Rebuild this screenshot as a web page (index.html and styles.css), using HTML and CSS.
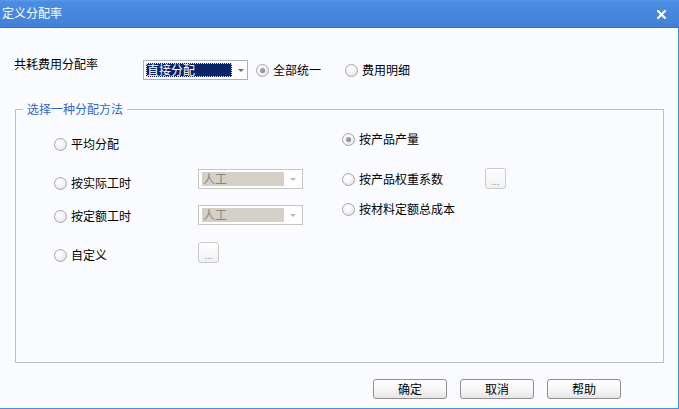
FILE: index.html
```html
<!DOCTYPE html>
<html lang="zh-CN">
<head>
<meta charset="utf-8">
<title>定义分配率</title>
<link rel="stylesheet" href="styles.css">
</head>
<body>
<div class="window">
  <div class="titlebar">
    <span class="title">定义分配率</span>
    <span class="close"><svg width="9" height="9" viewBox="0 0 9 9"><path d="M1 1 L8 8 M8 1 L1 8" stroke="#ffffff" stroke-width="2.2" stroke-linecap="square"/></svg></span>
  </div>
  <div class="body">
    <div class="toprow">
      <span class="lbl-main">共耗费用分配率</span>
      <div class="combo active">
        <span class="combo-sel">直接分配</span>
        <span class="arrow"></span>
      </div>
      <label class="radio checked r-all"><span class="dot"></span><span>全部统一</span></label>
      <label class="radio r-detail"><span class="dot"></span><span>费用明细</span></label>
    </div>

    <fieldset class="group">
      <legend>选择一种分配方法</legend>
      <div class="cols">
        <div class="col col-left">
          <div class="row">
            <label class="radio lw m3"><span class="dot"></span><span>平均分配</span></label>
          </div>
          <div class="row">
            <label class="radio lw m7"><span class="dot"></span><span>按实际工时</span></label>
            <div class="combo disabled"><span class="combo-dis">人工</span><span class="arrow light"></span></div>
          </div>
          <div class="row">
            <label class="radio lw m4"><span class="dot"></span><span>按定额工时</span></label>
            <div class="combo disabled"><span class="combo-dis">人工</span><span class="arrow light"></span></div>
          </div>
          <div class="row">
            <label class="radio lw m6"><span class="dot"></span><span>自定义</span></label>
            <button class="dots">...</button>
          </div>
        </div>
        <div class="col col-right">
          <div class="row">
            <label class="radio checked rw m3"><span class="dot"></span><span>按产品产量</span></label>
          </div>
          <div class="row">
            <label class="radio rw m4"><span class="dot"></span><span>按产品权重系数</span></label>
            <button class="dots">...</button>
          </div>
          <div class="row">
            <label class="radio rw m3"><span class="dot"></span><span>按材料定额总成本</span></label>
          </div>
        </div>
      </div>
    </fieldset>

    <div class="footer">
      <button class="btn">确定</button>
      <button class="btn">取消</button>
      <button class="btn">帮助</button>
    </div>
  </div>
</div>
</body>
</html>
```

FILE: styles.css
```css
* { box-sizing: border-box; }
html, body {
  margin: 0;
  padding: 0;
  background: #f9fbfe;
}
body {
  font-family: "Noto Sans CJK SC", "Noto Sans", sans-serif;
  font-size: 12px;
  color: #000;
}
.window {
  width: 679px;
  height: 409px;
  overflow: hidden;
  display: flex;
  flex-direction: column;
}
.titlebar {
  height: 28px;
  flex: 0 0 28px;
  background: linear-gradient(#5a9de9 0px, #4a8ce2 2px, #4586dc 20px, #3f7fd5 27px);
  border-bottom: 1px solid #3a74c6;
  display: flex;
  align-items: center;
  justify-content: space-between;
  padding: 0 13px 0 2px;
  color: #fff;
}
.title {
  font-size: 12px;
  line-height: 14px;
  margin-top: -1px;
}
.close {
  display: flex;
  width: 9px;
  height: 9px;
  margin-top: 1px;
}
.body {
  flex: 1 1 auto;
  background: #f9fbfe;
  border-right: 1px solid #4a8ee4;
  border-bottom: 1px solid #4a8ee4;
  display: flex;
  flex-direction: column;
}
.toprow {
  margin-top: 32px;
  height: 20px;
  padding-left: 14px;
  display: flex;
  align-items: center;
}
.lbl-main {
  width: 129px;
  flex: 0 0 129px;
  line-height: 14px;
  align-self: flex-start;
  margin-top: -3px;
}
.combo {
  width: 105px;
  height: 20px;
  flex: 0 0 105px;
  border: 1px solid #a9b0b9;
  background: #fff;
  display: flex;
  align-items: center;
  padding: 0 0 0 2px;
}
.combo-sel {
  width: 86px;
  height: 14px;
  background: #0a246a;
  color: #fff;
  line-height: 12px;
  font-size: 12px;
  border: 1px dotted #e8e8e8;
  white-space: nowrap;
  overflow: visible;
}
.arrow {
  flex: 1 1 auto;
  height: 100%;
  display: flex;
  align-items: center;
  justify-content: center;
}
.arrow::after {
  content: "";
  width: 0;
  height: 0;
  border-left: 3px solid transparent;
  border-right: 3px solid transparent;
  border-top: 3px solid #6e6e6e;
  margin-left: 2px;
}
.arrow.light::after {
  border-top-color: #b8b8b8;
  margin-left: 0;
}
.combo.disabled {
  border-color: #c6c6c6;
  padding-left: 3px;
}
.combo-dis {
  width: 82px;
  height: 14px;
  background: #d4d0c8;
  color: #8a8680;
  line-height: 14px;
  padding-left: 1px;
}
.radio {
  display: flex;
  align-items: center;
  gap: 4px;
  line-height: 14px;
  height: 14px;
  white-space: nowrap;
}
.dot {
  width: 13px;
  height: 13px;
  flex: 0 0 13px;
  border-radius: 50%;
  border: 1px solid #a8a8a8;
  background: radial-gradient(circle at 40% 35%, #ffffff 0%, #f4f4f4 45%, #d9d9d9 100%);
  display: flex;
  align-items: center;
  justify-content: center;
}
.radio.checked .dot::after {
  content: "";
  width: 5px;
  height: 5px;
  border-radius: 50%;
  background: radial-gradient(circle at 40% 40%, #b0b0b0, #707070);
}
.r-all {
  margin-left: 8px;
  width: 69px;
}
.r-detail {
  margin-left: 20px;
}
.group {
  margin: 22px 0 0 15px;
  width: 649px;
  height: 261px;
  border: 1px solid #b7c0cc;
  padding: 0;
  min-width: 0;
}
.group legend {
  margin-left: 7px;
  padding: 0 4px;
  line-height: 14px;
  font-size: 12px;
  color: #3565c4;
}
.cols {
  display: grid;
  grid-template-columns: 288px 1fr;
  padding-left: 38px;
}
.col {
  display: grid;
  align-content: start;
}
.col-left {
  padding-top: 18px;
  grid-template-rows: 35px 36px 37px 21px;
}
.col-right {
  padding-top: 13px;
  grid-template-rows: 39px 31px 20px;
}
.row {
  display: flex;
  align-items: flex-start;
}
.lw { width: 144px; flex: 0 0 144px; }
.rw { width: 143px; flex: 0 0 143px; }
.m3 { margin-top: 3px; }
.m4 { margin-top: 4px; }
.m6 { margin-top: 6px; }
.m7 { margin-top: 7px; }
.dots {
  display: block;
  width: 21px;
  height: 21px;
  padding: 8px 0 0 0;
  border: 1px solid #cacaca;
  border-radius: 3px;
  background: linear-gradient(#ffffff, #f0f0f0);
  color: #808080;
  font-family: "DejaVu Sans", sans-serif;
  font-size: 8px;
  line-height: 8px;
  text-align: center;
  letter-spacing: 0;
}
.footer {
  margin-top: 16px;
  padding-left: 373px;
  display: flex;
  gap: 13px;
}
.btn {
  width: 74px;
  height: 20px;
  padding: 0;
  border: 1px solid #8f8f8f;
  border-radius: 3px;
  background: linear-gradient(#ffffff 0%, #f7f7f7 50%, #e6e6e6 100%);
  font-family: "Noto Sans CJK SC", "Noto Sans", sans-serif;
  font-size: 12px;
  line-height: 18px;
  color: #000;
}
```
